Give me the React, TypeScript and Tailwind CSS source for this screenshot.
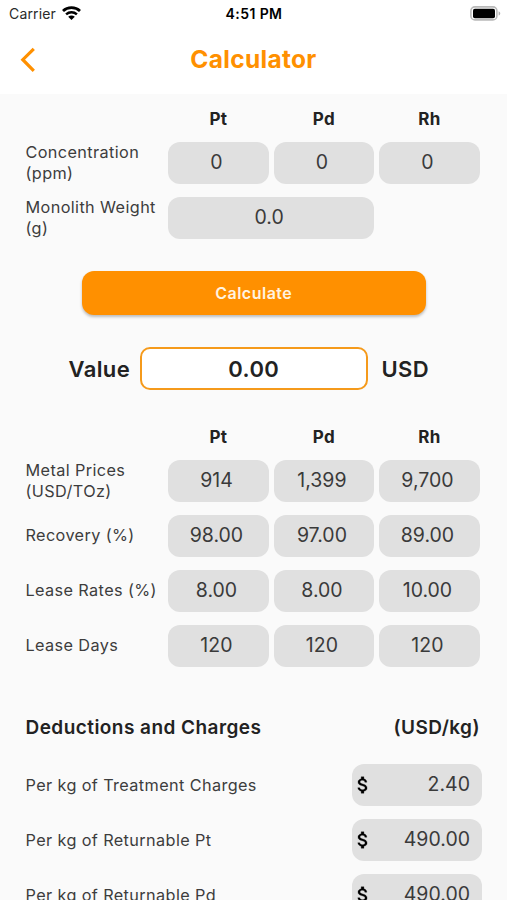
import { useState } from "react";

interface MetalRow {
  label: string;
  values: string[];
}

const metals = ["Pt", "Pd", "Rh"];

const priceRows: MetalRow[] = [
  { label: "Metal Prices (USD/TOz)", values: ["914", "1,399", "9,700"] },
  { label: "Recovery (%)", values: ["98.00", "97.00", "89.00"] },
  { label: "Lease Rates (%)", values: ["8.00", "8.00", "10.00"] },
  { label: "Lease Days", values: ["120", "120", "120"] },
];

const charges = [
  { label: "Per kg of Treatment Charges", value: "2.40" },
  { label: "Per kg of Returnable Pt", value: "490.00" },
  { label: "Per kg of Returnable Pd", value: "490.00" },
];

const StatusBar = () => (
  <div className="flex h-7 items-center justify-between pl-[9px] pr-[6px] text-black">
    <div className="flex w-40 items-center gap-[6px]">
      <span className="-mt-px text-[14px] tracking-[0.15px] text-[#2a2a2a]">Carrier</span>
      <svg width="19" height="14" viewBox="0 0 19 14" fill="none" className="-mt-[2px]">
        <path d="M1 5C5.6 0.6 13.4 0.6 18 5" stroke="black" strokeWidth="2.8" />
        <path d="M4.1 8.4C7.2 5.6 11.8 5.6 14.9 8.4" stroke="black" strokeWidth="2.5" />
        <path d="M9.5 14L6.2 10.8C8.1 9.2 10.9 9.2 12.8 10.8Z" fill="black" />
      </svg>
    </div>
    <span className="-ml-[2px] pb-px text-[14px] font-semibold tracking-[0.4px]">4:51 PM</span>
    <div className="flex w-40 justify-end">
      <svg width="31" height="15" viewBox="0 0 31 15" fill="none" className="-mt-[2px]">
        <rect x="0.9" y="0.9" width="26" height="13" rx="4" stroke="#b9b9b9" strokeWidth="1.6" />
        <rect x="3" y="2.8" width="22" height="9.4" rx="1.8" fill="black" />
        <path d="M28.6 5.2C30.8 6 30.8 8.8 28.6 9.6Z" fill="#b0b0b0" />
      </svg>
    </div>
  </div>
);

const DollarIcon = () => (
  <svg width="22" height="22" viewBox="0 0 24 24" fill="black" stroke="black" strokeWidth="0.3">
    <path d="M11.8 10.9c-2.27-.59-3-1.2-3-2.15 0-1.09 1.01-1.85 2.7-1.85 1.78 0 2.44.85 2.5 2.1h2.21c-.07-1.72-1.12-3.3-3.21-3.81V3h-3v2.16c-1.94.42-3.5 1.68-3.5 3.61 0 2.31 1.91 3.46 4.7 4.13 2.5.6 3 1.48 3 2.41 0 .69-.49 1.79-2.7 1.79-2.06 0-2.87-.92-2.98-2.1h-2.2c.12 2.19 1.76 3.42 3.68 3.83V21h3v-2.15c1.95-.37 3.5-1.5 3.5-3.55 0-2.84-2.43-3.81-4.7-4.4z" />
  </svg>
);

const MetalHeader = () => (
  <div className="flex gap-[5px] pl-[142.7px] text-[17px] leading-5 font-bold tracking-[0.3px] text-[#222]">
    {metals.map((metal) => (
      <span key={metal} className="w-[100.5px] text-center">
        {metal}
      </span>
    ))}
  </div>
);

const Label = ({ text }: { text: string }) => (
  <span className="mt-[-0.5px] w-[142.7px] shrink-0 pr-1 text-[16.25px] leading-[21px] tracking-[0.38px] text-[#3d3d3d]">
    {text}
  </span>
);

const ValueInput = ({ initial, wide }: { initial: string; wide?: boolean }) => {
  const [value, setValue] = useState(initial);

  return (
    <input
      value={value}
      onChange={(e) => setValue(e.target.value)}
      className={`${wide ? "w-[206px]" : "w-[100.5px]"} h-[42px] rounded-[12px] bg-[#e0e0e0] pr-[4px] pb-[2px] text-center text-[19.5px] text-[#3a3a3a] outline-none`}
    />
  );
};

const App = () => {
  const [result] = useState("0.00");

  return (
    <div className="h-[900px] w-[507px] overflow-hidden bg-[#fafafa] font-['Inter',sans-serif]">
      <header className="h-[94px] bg-white">
        <StatusBar />
        <div className="grid h-[64px] grid-cols-[64px_1fr_64px] items-center">
          <button className="pl-[20px]" aria-label="Back">
            <svg width="16" height="26" viewBox="0 0 16 26" fill="none">
              <path d="M13.8 1.8L2.8 12.7L13.8 23.8" stroke="#ff9000" strokeWidth="3.2" />
            </svg>
          </button>
          <h1 className="pb-px text-center text-[24.5px] font-bold tracking-[0.3px] text-[#ff9000]">Calculator</h1>
        </div>
      </header>

      <main className="pt-[15px] pl-[25.5px] pr-[25px]">
        <MetalHeader />
        <div className="mt-[13px] flex flex-col gap-[13px]">
          <div className="flex items-center">
            <Label text="Concentration (ppm)" />
            <div className="flex gap-[5px]">
              {metals.map((metal) => (
                <ValueInput key={metal} initial="0" />
              ))}
            </div>
          </div>
          <div className="flex items-center">
            <Label text="Monolith Weight (g)" />
            <ValueInput initial="0.0" wide />
          </div>
        </div>

        <button className="mt-[32px] ml-[56px] block h-[44px] w-[344.5px] rounded-[12px] bg-[#ff9000] text-[16px] font-semibold tracking-[0.5px] text-[#fff3e0] shadow-[0_2px_3px_rgba(0,0,0,0.25)]">
          Calculate
        </button>

        <div className="mt-[32px] flex items-center pl-[43px] text-[22px] font-semibold tracking-[0.4px] text-[#222]">
          <span className="w-[71px] pt-px">Value</span>
          <div className="flex h-[43px] w-[228.5px] items-center justify-center rounded-[10px] border-2 border-[#f59a1b] bg-white pt-px">
            {result}
          </div>
          <span className="pt-px pl-[13.5px]">USD</span>
        </div>

        <div className="mt-[37px]">
          <MetalHeader />
        </div>
        <div className="mt-[13px] flex flex-col gap-[13px]">
          {priceRows.map((row) => (
            <div key={row.label} className="flex items-center">
              <Label text={row.label} />
              <div className="flex gap-[5px]">
                {row.values.map((value, index) => (
                  <ValueInput key={index} initial={value} />
                ))}
              </div>
            </div>
          ))}
        </div>

        <div className="mt-[47px] flex justify-between pr-[2px] text-[19px] leading-[28px] font-semibold tracking-[0.45px] text-[#222]">
          <h2>Deductions and Charges</h2>
          <span>(USD/kg)</span>
        </div>

        <div className="mt-[21.5px] flex flex-col gap-[12.5px]">
          {charges.map((charge) => (
            <div key={charge.label} className="flex items-center justify-between">
              <span className="text-[16.25px] tracking-[0.38px] text-[#3d3d3d]">{charge.label}</span>
              <div className="flex h-[42.5px] w-[130.5px] items-center justify-between rounded-[12px] bg-[#e0e0e0] pr-[12px]">
                <DollarIcon />
                <span className="pb-px text-[19.5px] text-[#3a3a3a]">{charge.value}</span>
              </div>
            </div>
          ))}
        </div>
      </main>
    </div>
  );
};

export default App;
